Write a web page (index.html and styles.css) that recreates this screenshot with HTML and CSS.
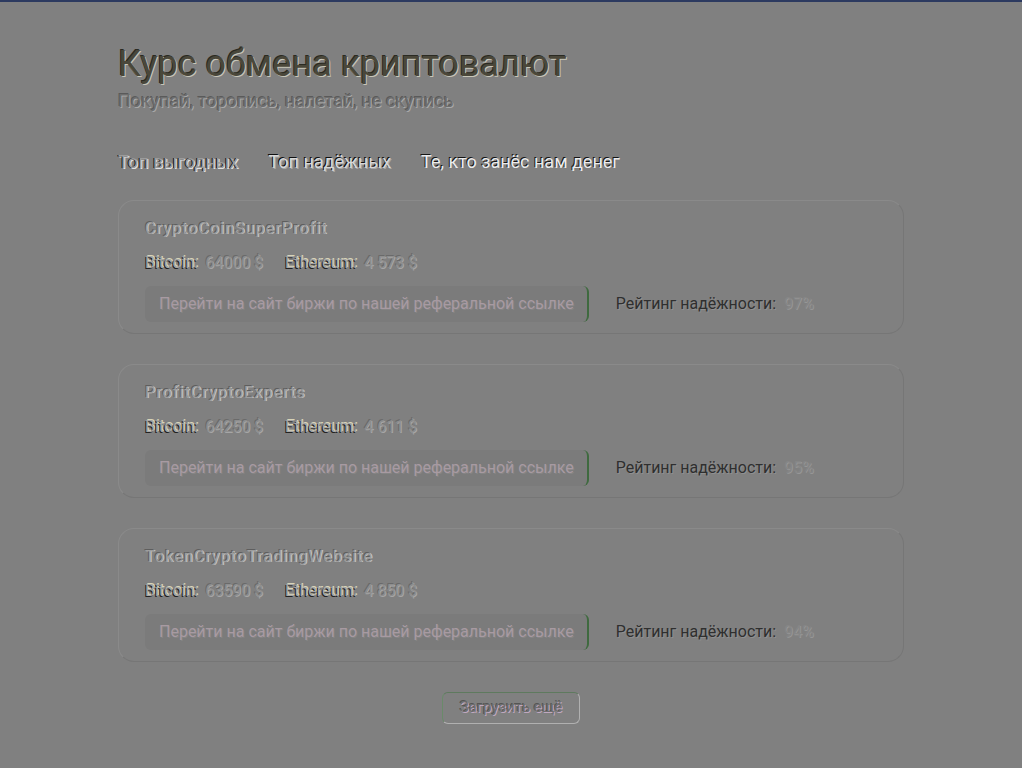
FILE: index.html
```html
<!DOCTYPE html>
<html lang="ru">
<head>
<meta charset="utf-8">
<title>Курс обмена криптовалют</title>
<link rel="stylesheet" href="styles.css">
</head>
<body>
<div class="topbar"></div>
<main class="page">
  <header class="head">
    <h1 class="title">Курс обмена криптовалют</h1>
    <p class="subtitle">Покупай, торопись, налетай, не скупись</p>
  </header>
  <nav class="tabs">
    <span class="tab tab-a">Топ выгодных</span>
    <span class="tab tab-b">Топ надёжных</span>
    <span class="tab tab-c">Те, кто занёс нам денег</span>
  </nav>
  <section class="list">
    <article class="card">
      <div class="name">CryptoCoinSuperProfit</div>
      <div class="prices"><span><span class="lbl">Bitcoin:</span> <span class="val">64000 $</span></span><span><span class="lbl">Ethereum:</span> <span class="val">4 573 $</span></span></div>
      <div class="row"><a class="link">Перейти на сайт биржи по нашей реферальной ссылке</a><span class="rating">Рейтинг надёжности: <span class="pct">97%</span></span></div>
    </article>
    <article class="card">
      <div class="name">ProfitCryptoExperts</div>
      <div class="prices"><span><span class="lbl">Bitcoin:</span> <span class="val">64250 $</span></span><span><span class="lbl">Ethereum:</span> <span class="val">4 611 $</span></span></div>
      <div class="row"><a class="link">Перейти на сайт биржи по нашей реферальной ссылке</a><span class="rating">Рейтинг надёжности: <span class="pct">95%</span></span></div>
    </article>
    <article class="card">
      <div class="name">TokenCryptoTradingWebsite</div>
      <div class="prices"><span><span class="lbl">Bitcoin:</span> <span class="val">63590 $</span></span><span><span class="lbl">Ethereum:</span> <span class="val">4 850 $</span></span></div>
      <div class="row"><a class="link">Перейти на сайт биржи по нашей реферальной ссылке</a><span class="rating">Рейтинг надёжности: <span class="pct">94%</span></span></div>
    </article>
  </section>
  <div class="more-wrap"><button class="more">Загрузить ещё</button></div>
</main>
</body>
</html>
```
FILE: styles.css
```css
html, body {
  margin: 0;
  padding: 0;
  background: #808080;
}
body {
  font-family: Roboto, "Liberation Sans", sans-serif;
  min-height: 768px;
}
.topbar {
  height: 2px;
  background: #2c3a60;
}
.page {
  width: 786px;
  margin: 0 auto;
  padding-top: 42px;
}
.head {
  display: flex;
  flex-direction: column;
}
.title {
  margin: 0;
  font-size: 36px;
  font-weight: 400;
  line-height: 40px;
  color: #4a473a;
  text-shadow: 1px 1px 0 #c8c6b8, -1px -1px 0 #2a2a22;
}
.subtitle {
  margin: 6px 0 0;
  font-size: 18px;
  line-height: 22px;
  color: #6e6e6e;
  text-shadow: 1px 1px 0 #a8a8a8, -1px -1px 0 #5a5a5a;
}
.tabs {
  display: flex;
  gap: 30px;
  margin-top: 39px;
  font-size: 18px;
  line-height: 22px;
}
.tab {
  color: #d8d8d8;
  text-shadow: -1px -1px 0 #111, 1px 1px 0 #a8a8a8;
}
.tab-a {
  color: #9c9c9c;
  text-shadow: -1px 0 0 #1a1a1a, 1px 1px 0 #e0e0e0;
}
.tab-c {
  color: #ececec;
  text-shadow: -1px -1px 0 #151515;
}
.list {
  display: flex;
  flex-direction: column;
  gap: 30px;
  margin-top: 27px;
}
.card {
  border-radius: 16px;
  border: 1px solid #8a8a8a;
  border-right-color: #767676;
  border-bottom-color: #767676;
  padding: 17px 26px 11px;
  display: flex;
  flex-direction: column;
}
.name {
  font-size: 16px;
  font-weight: 400;
  line-height: 22px;
  color: #9e9e9e;
  text-shadow: -1px -1px 0 #5e5e5e, 1px 0 0 #c8c8c8;
  letter-spacing: 1.1px;
}
.prices {
  display: flex;
  gap: 22px;
  margin-top: 13px;
  font-size: 16px;
  line-height: 20px;
}
.lbl {
  color: #a6a6a6;
  text-shadow: -1px 1px 0 #222, 1px -1px 0 #d8d4b8;
}
.val {
  color: #8e8e8e;
  margin-left: 3px;
  text-shadow: 1px 1px 0 #a6a6a6, -1px -1px 0 #6a6a6a;
}
.row {
  display: flex;
  align-items: center;
  gap: 27px;
  margin-top: 13px;
}
.link {
  display: block;
  padding: 8px 13px 8px 14px;
  font-size: 16px;
  line-height: 20px;
  color: #a89aa2;
  background: #7b7b7b;
  border-radius: 6px;
  border-right: 2px solid #3f6a3f;
  text-shadow: 1px 1px 0 #858585;
}
.rating {
  font-size: 16px;
  line-height: 20px;
  color: #2f2f2f;
  text-shadow: 1px 1px 0 #909090;
}
.pct {
  color: #868686;
  margin-left: 4px;
  text-shadow: 1px 1px 0 #969696;
}
.more-wrap {
  display: flex;
  justify-content: center;
  margin-top: 30px;
}
.more {
  font-family: Roboto, "Liberation Sans", sans-serif;
  font-size: 15px;
  line-height: 19px;
  padding: 5px 17px 6px;
  background: #808080;
  color: #6e6e6e;
  border: 1px solid #b0b0b0;
  border-top-color: #5e7a5e;
  border-left-color: #6a8a6a;
  border-radius: 6px;
  text-shadow: 1px 1px 0 #c0a8c0, -1px -1px 0 #555;
}
```
